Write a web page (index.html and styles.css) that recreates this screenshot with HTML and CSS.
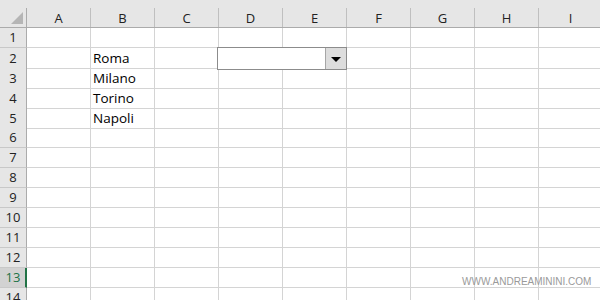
FILE: index.html
```html
<!DOCTYPE html>
<html>
<head>
<meta charset="utf-8">
<link rel="stylesheet" href="styles.css">
</head>
<body>
<div class="sheet">
  <div class="colheads">
    <div class="corner"><span class="tri"></span></div>
    <div class="ch">A</div><div class="ch">B</div><div class="ch">C</div>
    <div class="ch">D</div><div class="ch">E</div><div class="ch">F</div>
    <div class="ch">G</div><div class="ch">H</div><div class="ch">I</div>
  </div>
  <div class="body" id="grid"></div>
  <div class="combo">
    <div class="combo-field"></div>
    <div class="combo-btn"><span class="arrow"></span></div>
  </div>
  <div class="watermark">WWW.ANDREAMININI.COM</div>
</div>
<script src="script.js"></script>
</body>
</html>
```
FILE: styles.css
```css
html, body {
  margin: 0;
  padding: 0;
  background: #ffffff;
  overflow: hidden;
  width: 600px;
  height: 300px;
}
.sheet {
  position: relative;
  width: 600px;
  height: 300px;
  overflow: hidden;
  font-family: "Open Sans", "Liberation Sans", sans-serif;
  font-size: 13px;
  color: #000;
}
.colheads {
  display: grid;
  grid-template-columns: 27px repeat(9, 64px);
  height: 28px;
  background: #e6e6e6;
  border-bottom: 1px solid #ababab;
  box-sizing: border-box;
  width: 603px;
}
.corner {
  position: relative;
  border-right: 1px solid #ababab;
  box-sizing: border-box;
  margin-top: 8px;
}
.tri {
  position: absolute;
  left: 11px;
  top: 4px;
  width: 0;
  height: 0;
  border-left: 12px solid transparent;
  border-bottom: 12px solid #b5b5b5;
}
.ch {
  margin-top: 8px;
  border-right: 1px solid #bfbfbf;
  box-sizing: border-box;
  display: flex;
  align-items: center;
  justify-content: center;
  font-size: 13px;
  color: #222;
  line-height: 18px;
}
.body {
  display: flex;
  flex-direction: column;
  width: 603px;
}
.row {
  display: grid;
  grid-template-columns: 27px repeat(9, 64px);
  height: 20px;
}
.rh {
  background: #e6e6e6;
  border-right: 1px solid #ababab;
  border-bottom: 1px solid #c8c8c8;
  box-sizing: border-box;
  display: flex;
  align-items: center;
  justify-content: center;
  color: #222;
  font-size: 13px;
  line-height: 19px;
}
.rh.sel {
  background: #d2d2d2;
  border-right: 2px solid #217346;
  color: #217346;
  padding-left: 1px;
}
.cell {
  border-right: 1px solid #d4d4d4;
  border-bottom: 1px solid #d4d4d4;
  box-sizing: border-box;
  padding-left: 2px;
  line-height: 20px;
  font-size: 13.5px;
  white-space: nowrap;
}
.combo {
  position: absolute;
  left: 217px;
  top: 47px;
  width: 130px;
  height: 23px;
  box-sizing: border-box;
  border: 1px solid #8c8c8c;
  background: #fff;
  display: flex;
}
.combo-field {
  flex: 1;
}
.combo-btn {
  width: 20px;
  background: #dddddd;
  border-left: 1px solid #a6a6a6;
  display: flex;
  align-items: center;
  justify-content: center;
}
.arrow {
  width: 0;
  height: 0;
  border-left: 5px solid transparent;
  border-right: 5px solid transparent;
  border-top: 5px solid #000;
  margin-top: 1px;
}
.watermark {
  position: absolute;
  left: 462px;
  top: 276px;
  font-family: "Liberation Sans", Arial, sans-serif;
  font-size: 10px;
  color: #9a9a9a;
  line-height: 12px;
}
```
FILE: script.js
```js
var data = {2: "Roma", 3: "Milano", 4: "Torino", 5: "Napoli"};
var grid = document.getElementById("grid");
for (var r = 1; r <= 14; r++) {
  var row = document.createElement("div");
  row.className = "row";
  var rh = document.createElement("div");
  rh.className = r === 13 ? "rh sel" : "rh";
  rh.textContent = r;
  row.appendChild(rh);
  for (var c = 0; c < 9; c++) {
    var cell = document.createElement("div");
    cell.className = "cell";
    if (c === 1 && data[r]) cell.textContent = data[r];
    row.appendChild(cell);
  }
  grid.appendChild(row);
}
```
